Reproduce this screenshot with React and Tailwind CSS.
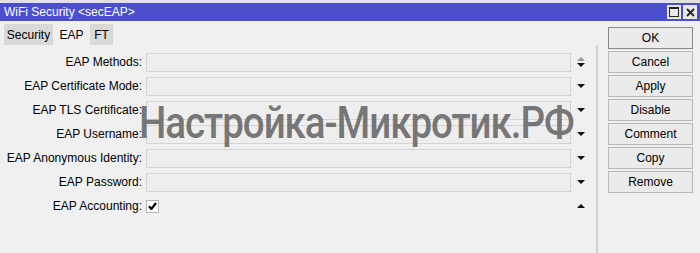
import React from "react";

const rows = [
  { label: "EAP Methods:", kind: "updown" },
  { label: "EAP Certificate Mode:", kind: "down" },
  { label: "EAP TLS Certificate:", kind: "down" },
  { label: "EAP Username:", kind: "down" },
  { label: "EAP Anonymous Identity:", kind: "down" },
  { label: "EAP Password:", kind: "down" },
  { label: "EAP Accounting:", kind: "check" },
];

const buttons = ["OK", "Cancel", "Apply", "Disable", "Comment", "Copy", "Remove"];

function Arrow({ kind }) {
  if (kind === "updown") {
    return (
      <svg width="10" height="12" viewBox="0 0 10 12">
        <path d="M1 5 L5 1 L9 5 Z" fill="#9a9a9a" />
        <path d="M1 7 L9 7 L5 11 Z" fill="#111" />
      </svg>
    );
  }
  if (kind === "check") {
    return (
      <svg width="10" height="6" viewBox="0 0 10 6">
        <path d="M1 5 L5 1 L9 5 Z" fill="#111" />
      </svg>
    );
  }
  return (
    <svg width="10" height="6" viewBox="0 0 10 6">
      <path d="M1 1 L9 1 L5 5 Z" fill="#111" />
    </svg>
  );
}

export default function App() {
  return (
    <div className="relative w-[700px] h-[253px] overflow-hidden bg-[#f0f0f0] font-['Liberation_Sans',Arial,sans-serif] text-[12px] text-black">
      <div className="h-[3px] bg-[#e2e2e2]" />
      {/* title bar */}
      <div className="h-[18px] bg-[#4b4fcb] flex items-center justify-between pl-[4px] pr-[3px]">
        <span className="text-white text-[12px] leading-none">WiFi Security &lt;secEAP&gt;</span>
        <div className="flex gap-[2px]">
          <div className="w-[14px] h-[14px] bg-[#e8e8e8] flex items-center justify-center">
            <div className="w-[10px] h-[10px] border border-[#222] border-t-2" />
          </div>
          <div className="w-[14px] h-[14px] bg-[#e8e8e8] flex items-center justify-center">
            <svg width="9" height="9" viewBox="0 0 9 9">
              <path d="M1 1 L8 8 M8 1 L1 8" stroke="#222" strokeWidth="1.8" />
            </svg>
          </div>
        </div>
      </div>

      <div className="flex">
        <div className="w-[598px] flex flex-col pt-[3px]">
          {/* tabs */}
          <div className="h-[21px] flex pl-[4px]">
            <div className="w-[49px] bg-[#d9d9d9] flex items-center justify-center">Security</div>
            <div className="w-[37px] flex items-center justify-center">EAP</div>
            <div className="w-[23px] bg-[#d9d9d9] flex items-center justify-center">FT</div>
          </div>
          {/* panel */}
          <div className="h-[211px] border-r-2 border-[#d2d2d2] pt-[5px]">
            {rows.map((r) => (
              <div key={r.label} className="h-[24px] flex items-center">
                <div className="w-[146px] pr-[4px] text-right whitespace-nowrap">{r.label}</div>
                {r.kind === "check" ? (
                  <div className="w-[425px] flex">
                    <div className="w-[13px] h-[13px] bg-white border border-[#b4b4b4] flex items-center justify-center">
                      <svg width="9" height="8" viewBox="0 0 9 8">
                        <path d="M1 4.3 L3.4 7 L8 1" stroke="#000" strokeWidth="2.2" fill="none" />
                      </svg>
                    </div>
                  </div>
                ) : (
                  <div className="w-[425px] h-[19px] border border-[#d4d4d4] bg-[#eeeeee]" />
                )}
                <div className="w-[19px] flex items-center justify-center">
                  <Arrow kind={r.kind} />
                </div>
              </div>
            ))}
          </div>
        </div>
        {/* buttons */}
        <div className="flex-1 pt-[6px] pl-[10px] pr-[7px] flex flex-col gap-[2px]">
          {buttons.map((b) => (
            <div
              key={b}
              className={`h-[22px] flex items-center justify-center border bg-[#ebebeb] ${
                b === "OK" ? "border-[#8a8a8a]" : "border-[#b9b9b9]"
              }`}
            >
              {b}
            </div>
          ))}
        </div>
      </div>

      {/* watermark */}
      <div className="absolute left-[139px] top-[101px] origin-left scale-x-[0.876] text-[44px] font-medium tracking-[-1.2px] leading-none text-[#666666]/90 font-['Roboto',sans-serif] whitespace-nowrap pointer-events-none">
        Настройка-Микротик.РФ
      </div>
    </div>
  );
}
